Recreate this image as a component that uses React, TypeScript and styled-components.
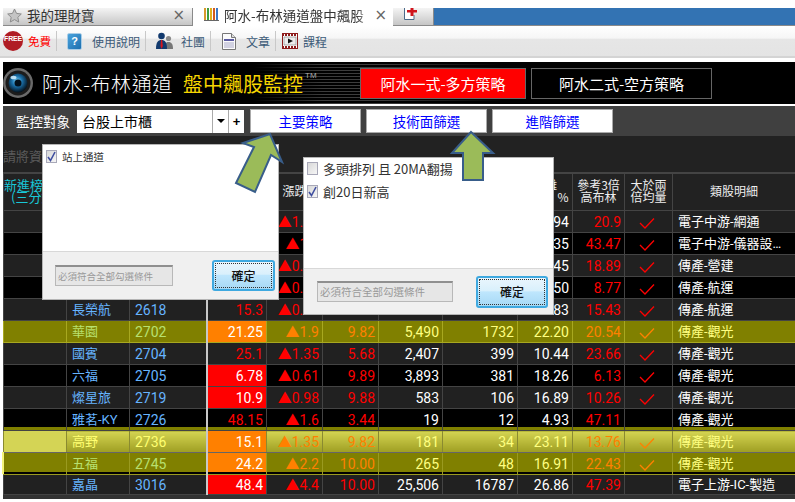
import React from "react";
import styled, { createGlobalStyle, css } from "styled-components";

const cjk = `"Noto Sans CJK TC", "Noto Sans", sans-serif`;
const num = `Roboto, "Noto Sans CJK TC", sans-serif`;

const Global = createGlobalStyle`
  html, body { margin: 0; padding: 0; background: #fff; overflow: hidden; }
  * { box-sizing: border-box; }
`;

const Page = styled.div`
  position: relative;
  width: 795px;
  height: 502px;
  padding: 8px 0 0 3px;
  font-family: ${cjk};
  background: #fff;
  overflow: hidden;
`;

/* ---------- browser tabs ---------- */
const TabBar = styled.div`
  display: flex;
  height: 18px;
`;
const Tab = styled.div<{ $w: number; $active?: boolean }>`
  width: ${(p) => p.$w}px;
  height: 18px;
  display: flex;
  align-items: flex-start;
  color: #333;
  font-size: 13.5px;
  line-height: 14px;
  white-space: nowrap;
  overflow: hidden;
  ${(p) =>
    p.$active
      ? css`
          background: #fff;
          padding: 0 6px 0 11px;
        `
      : css`
          background: linear-gradient(#f4f4f4, #c6c6c6);
          border-right: 1px solid #8a8a8a;
          border-bottom: 1px solid #8a8a8a;
          padding: 0 7px 0 4px;
        `}
`;
const NewTab = styled(Tab)`
  padding-left: 11px;
`;
const TabLabel = styled.span<{ $w: number; $fade?: boolean }>`
  display: block;
  margin-left: 5px;
  width: ${(p) => p.$w}px;
  height: 18px;
  ${(p) =>
    p.$fade &&
    css`
      -webkit-mask-image: linear-gradient(90deg, #000 92%, rgba(0, 0, 0, 0.35));
    `}
`;
const TabClose = styled.span`
  margin-left: auto;
  font: 15px/15px "DejaVu Sans", sans-serif;
  color: #666;
`;
const TabFill = styled.div`
  flex: 1;
  background: #3373b3;
  border-bottom: 1px solid #8a8a8a;
`;

/* ---------- site toolbar ---------- */
const Toolbar = styled.div`
  height: 32px;
  margin-left: -3px;
  padding-left: 3px;
  display: flex;
  align-items: center;
  background: linear-gradient(#fff 0, #f6f6f6 40%, #e6e6e6 45%, #e4e4e4 100%);
  border-bottom: 2px solid #d4d4d4;
`;
const ToolItem = styled.div<{ $w: number; $gap: number; $pl: number }>`
  width: ${(p) => p.$w}px;
  padding-left: ${(p) => p.$pl}px;
  display: flex;
  align-items: center;
  gap: ${(p) => p.$gap}px;
  height: 20px;
  font-size: 12px;
  color: #3c5a78;
  border-right: 1px solid #c8c8c8;
  white-space: nowrap;
  &:last-child { border-right: 0; }
`;
const RedLabel = styled.span`
  color: #f00;
  font-size: 11.5px;
`;
const FreeBadge = styled.div`
  width: 20px;
  height: 20px;
  border-radius: 50%;
  background: #b01c24;
  color: #fff;
  font: bold 7px/16px "Liberation Sans", sans-serif;
  text-align: center;
  letter-spacing: -0.2px;
  flex: none;
`;
const HelpIcon = styled.div`
  width: 15px;
  height: 17px;
  background: linear-gradient(135deg, #4ba3dd, #1d6fae);
  border: 1px solid #aacde6;
  border-radius: 2px;
  color: #fff;
  font: bold 11px/15px "Liberation Sans", sans-serif;
  text-align: center;
  flex: none;
`;

/* ---------- product header ---------- */
const Header = styled.div`
  margin-top: 4px;
  height: 42px;
  display: flex;
  align-items: center;
  color: #fff;
  background-color: #000;
  background-image: linear-gradient(90deg, #000 250px, transparent 320px, transparent 380px, #000 500px),
    repeating-linear-gradient(0deg, #3c3c3c 0 1px, #000 1px 3px);
`;
const Lens = styled.svg`
  width: 30px;
  height: 30px;
  flex: none;
  margin-right: 9px;
`;
const Title = styled.div`
  font-size: 20px;
  font-weight: 300;
  letter-spacing: 0.6px;
  width: 141px;
  white-space: nowrap;
`;
const GoldTitle = styled.div`
  font-size: 20px;
  color: #f7d600;
  white-space: nowrap;
  width: 120px;
  position: relative;
`;
const TradeMark = styled.sup`
  position: absolute;
  left: 122px;
  top: 2px;
  margin: 0;
  font: 8px "Liberation Sans", sans-serif;
  color: #aaa;
`;
const Strategy = styled.div<{ $w: number; $on?: boolean; $ml: number }>`
  width: ${(p) => p.$w}px;
  margin-left: ${(p) => p.$ml}px;
  height: 31px;
  border: 1px solid #666;
  background: ${(p) => (p.$on ? "#f00" : "#000")};
  color: #fff;
  font-size: 15px;
  line-height: 29px;
  text-align: center;
  white-space: nowrap;
`;

/* ---------- controls ---------- */
const Controls = styled.div`
  margin-top: 2px;
  height: 30px;
  background: #404040;
  display: flex;
  align-items: center;
  padding-left: 13px;
`;
const ControlLabel = styled.div`
  color: #fff;
  font-size: 13.5px;
  width: 61px;
  white-space: nowrap;
`;
const Select = styled.div`
  width: 167px;
  height: 23px;
  background: #fff;
  display: flex;
  align-items: center;
  font-size: 14px;
  color: #000;
  padding-left: 5px;
  margin-right: 6px;
`;
const SelectText = styled.span`
  flex: 1;
`;
const SelectBtn = styled.span`
  width: 16px;
  height: 23px;
  border-left: 1px solid #aaa;
  display: flex;
  align-items: center;
  justify-content: center;
  font: bold 13px "Liberation Sans", sans-serif;
`;
const Caret = styled.span`
  width: 0;
  height: 0;
  border-left: 4px solid transparent;
  border-right: 4px solid transparent;
  border-top: 4px solid #000;
`;
const FilterBtn = styled.div<{ $w: number }>`
  width: ${(p) => p.$w}px;
  height: 24px;
  margin-right: 5px;
  background: #fff;
  border: 1px solid #aaa;
  color: #00f;
  font-size: 13.5px;
  line-height: 22px;
  text-align: center;
`;

/* ---------- info strip + table ---------- */
const Info = styled.div`
  height: 37px;
  background: #222;
  color: #5a5a5a;
  font-size: 13px;
  line-height: 39px;
  border-bottom: 1px solid #444;
`;
const Table = styled.table`
  width: 792px;
  table-layout: fixed;
  border-collapse: collapse;
  font-family: ${num};
`;
const HeadCell = styled.th<{ $cyan?: boolean }>`
  height: 37px;
  padding: 0 0 2px;
  background: #222;
  border: 1px solid #444;
  color: ${(p) => (p.$cyan ? "#19c8d8" : "#eee")};
  font-family: ${cjk};
  font-size: ${(p) => (p.$cyan ? 13 : 12)}px;
  font-weight: 400;
  line-height: 12.5px;
  white-space: nowrap;
  overflow: hidden;
`;
type Kind = "dark" | "black" | "olive" | "blackBand" | "bright" | "oliveGap" | "last";
const bg: Record<Kind, string> = {
  dark: "#212121",
  black: "#000",
  olive: "#808000",
  blackBand: "#000",
  bright: "linear-gradient(#d4d452, #9e9e22)",
  oliveGap: "#808000",
  last: "#212121",
};
const Row = styled.tr<{ $kind: Kind }>`
  height: ${(p) => (p.$kind === "last" ? 20 : 22)}px;
`;
const Cell = styled.td<{
  $kind: Kind;
  $tone: "name" | "red" | "white" | "text";
  $fill?: "red" | "orange";
  $align?: string;
  $cjk?: boolean;
}>`
  position: relative;
  padding: 0 ${(p) => (p.$align === "left" ? 0 : 3)}px 0 ${(p) => (p.$align === "left" ? 5 : 0)}px;
  border: 1px solid #444;
  text-align: ${(p) => p.$align || "right"};
  font-size: ${(p) => (p.$cjk ? 13 : 14)}px;
  line-height: 18px;
  white-space: nowrap;
  overflow: hidden;
  background: ${(p) => (p.$fill === "red" ? "#f00" : p.$fill === "orange" ? "#ff8000" : bg[p.$kind])};
  ${(p) => {
    const lit = p.$kind === "olive" || p.$kind === "bright" || p.$kind === "oliveGap";
    if (p.$fill) return "color:#fff;";
    if (p.$tone === "name") return `color:${lit ? (p.$kind === "bright" ? "#ffff70" : "#b8e070") : "#66b4ff"};`;
    if (p.$tone === "red") return `color:${lit ? "#ff8000" : "#f00"};`;
    return `color:${lit ? "#ffff80" : "#fff"};`;
  }}
  ${(p) =>
    p.$kind === "blackBand" &&
    css`
      box-shadow: inset 0 -3px 0 #808000;
    `}
  ${(p) =>
    p.$kind === "bright" &&
    css`
      border-color: #8a8a30;
      border-bottom-color: #666;
    `}
  ${(p) =>
    p.$kind === "oliveGap" &&
    css`
      box-shadow: inset 0 -2px 0 #000;
      border-color: #9a9a20;
    `}
  ${(p) =>
    p.$kind === "olive" &&
    css`
      border-color: #a8a820;
    `}
`;
const FirstCell = styled(Cell)`
  overflow: visible;
  ${(p) =>
    p.$kind === "bright" &&
    css`
      background: #d4d455;
    `}
`;
const PriceCell = styled(Cell)`
  border-left: 2px solid #c8c8c8;
`;
const Tick = styled.svg`
  display: block;
  margin: 3px auto 0;
  width: 16px;
  height: 11px;
`;
const Foot = styled.div`
  height: 4px;
  background: #333;
`;
const LeftGlow = styled.span`
  position: absolute;
  left: -2px;
  top: -1px;
  width: 2px;
  height: 22px;
  background: #f4f47a;
`;

/* ---------- floating dialogs ---------- */
const Dialog = styled.div<{ $x: number; $y: number; $w: number; $h: number; $foot: number }>`
  position: absolute;
  left: ${(p) => p.$x}px;
  top: ${(p) => p.$y}px;
  width: ${(p) => p.$w}px;
  height: ${(p) => p.$h}px;
  background: #f0f0f0;
  border: 1px solid #b5b5b5;
  display: grid;
  grid-template-rows: 1fr ${(p) => p.$foot}px;
`;
const List = styled.div<{ $size: number; $top: number }>`
  background: #fff;
  padding: ${(p) => p.$top}px 3px 0;
  color: #333;
  font-size: ${(p) => p.$size}px;
  border-bottom: 1px solid #d8d8d8;
  display: flex;
  flex-direction: column;
  gap: 2px;
`;
const Option = styled.div`
  display: flex;
  align-items: center;
  gap: 5px;
  height: 21px;
  white-space: nowrap;
`;
const Box = styled.span`
  width: 11px;
  height: 13px;
  border: 1px solid #a8a8b8;
  background: linear-gradient(135deg, #d8d8d8, #f6f6f6);
  flex: none;
  display: flex;
  align-items: center;
  justify-content: center;
`;
const DialogFoot = styled.div<{ $l: number; $r: number }>`
  display: flex;
  align-items: center;
  justify-content: space-between;
  padding: 0 ${(p) => p.$r}px 0 ${(p) => p.$l}px;
`;
const Hint = styled.div<{ $w: number; $size: number }>`
  width: ${(p) => p.$w}px;
  height: 21px;
  background: #e6e6e6;
  border: 1px solid #b8b8b8;
  border-top: 2px solid #8f8f8f;
  color: #999;
  font-size: ${(p) => p.$size}px;
  line-height: 18px;
  padding-left: 2px;
  white-space: nowrap;
  overflow: hidden;
`;
const Confirm = styled.div<{ $w: number; $h: number }>`
  width: ${(p) => p.$w}px;
  height: ${(p) => p.$h}px;
  border: 2px solid #3fa9e0;
  border-radius: 3px;
  background: linear-gradient(#eaf6fd 0, #d9f0fc 45%, #bee6fd 50%, #a7d9f5 100%);
  color: #111;
  font-size: 12px;
  font-weight: 500;
  line-height: ${(p) => p.$h - 4}px;
  text-align: center;
  outline: 1px dotted #333;
  outline-offset: -4px;
`;
const Arrow = styled.svg`
  position: absolute;
  left: 0;
  top: 0;
  width: 795px;
  height: 502px;
  pointer-events: none;
`;

/* ---------- data ---------- */
type R = {
  kind: Kind;
  name: string;
  code: string;
  price: string;
  fill?: "red" | "orange";
  chg: string;
  pct: string;
  vol: string;
  vol2: string;
  avg: string;
  ref: string;
  tick: boolean;
  cat: string;
};
const rows: R[] = [
  { kind: "dark", name: "智邦", code: "2345", price: "18.2", chg: "▲1.35", pct: "9.82", vol: "1,204", vol2: "320", avg: "18.94", ref: "20.9", tick: true, cat: "電子中游-網通" },
  { kind: "black", name: "致茂", code: "2360", price: "41.3", chg: "▲1.1", pct: "2.74", vol: "2,110", vol2: "402", avg: "40.35", ref: "43.47", tick: true, cat: "電子中游-儀器設…" },
  { kind: "dark", name: "潤弘", code: "2597", price: "16.8", chg: "▲0.45", pct: "2.75", vol: "840", vol2: "210", avg: "16.45", ref: "18.89", tick: true, cat: "傳產-營建" },
  { kind: "black", name: "華航", code: "2610", price: "8.12", chg: "▲0.71", pct: "9.58", vol: "9,320", vol2: "1230", avg: "7.50", ref: "8.77", tick: true, cat: "傳產-航運" },
  { kind: "dark", name: "長榮航", code: "2618", price: "15.3", chg: "▲0.81", pct: "", vol: "", vol2: "", avg: "14.83", ref: "15.43", tick: true, cat: "傳產-航運" },
  { kind: "olive", name: "華園", code: "2702", price: "21.25", fill: "orange", chg: "▲1.9", pct: "9.82", vol: "5,490", vol2: "1732", avg: "22.20", ref: "20.54", tick: true, cat: "傳產-觀光" },
  { kind: "dark", name: "國賓", code: "2704", price: "25.1", chg: "▲1.35", pct: "5.68", vol: "2,407", vol2: "399", avg: "10.44", ref: "23.66", tick: true, cat: "傳產-觀光" },
  { kind: "black", name: "六福", code: "2705", price: "6.78", fill: "red", chg: "▲0.61", pct: "9.89", vol: "3,893", vol2: "381", avg: "18.26", ref: "6.13", tick: true, cat: "傳產-觀光" },
  { kind: "dark", name: "燦星旅", code: "2719", price: "10.9", fill: "red", chg: "▲0.98", pct: "9.88", vol: "583", vol2: "106", avg: "16.89", ref: "10.26", tick: true, cat: "傳產-觀光" },
  { kind: "blackBand", name: "雅茗-KY", code: "2726", price: "48.15", chg: "▲1.6", pct: "3.44", vol: "19", vol2: "12", avg: "4.93", ref: "47.11", tick: false, cat: "傳產-觀光" },
  { kind: "bright", name: "高野", code: "2736", price: "15.1", fill: "orange", chg: "▲1.35", pct: "9.82", vol: "181", vol2: "34", avg: "23.11", ref: "13.76", tick: true, cat: "傳產-觀光" },
  { kind: "oliveGap", name: "五福", code: "2745", price: "24.2", fill: "orange", chg: "▲2.2", pct: "10.00", vol: "265", vol2: "48", avg: "16.91", ref: "22.43", tick: true, cat: "傳產-觀光" },
  { kind: "last", name: "嘉晶", code: "3016", price: "48.4", fill: "red", chg: "▲4.4", pct: "10.00", vol: "25,506", vol2: "16787", avg: "26.86", ref: "47.39", tick: false, cat: "電子上游-IC-製造" },
];
const widths = [63, 63, 77, 60, 56, 56, 64, 75, 55, 52, 48, 123];

const StarIcon = () => (
  <svg width="15" height="15" viewBox="0 0 15 15">
    <path d="M7.5 1l2 4.4 4.8.6-3.5 3.3.9 4.7-4.2-2.4-4.2 2.4.9-4.7L.7 6l4.8-.6z" fill="#c4c4c4" stroke="#8c8c8c" />
  </svg>
);
const BarsIcon = () => (
  <svg width="15" height="13" viewBox="0 0 15 13">
    <rect x="0" y="0" width="2" height="12" fill="#d89a2c" />
    <rect x="3" y="0" width="2" height="12" fill="#3f9e3f" />
    <rect x="6" y="0" width="2" height="12" fill="#e0b020" />
    <rect x="9" y="0" width="2" height="12" fill="#d05a20" />
    <rect x="12" y="0" width="2" height="12" fill="#3a78c8" />
    <rect x="0" y="12" width="15" height="1" fill="#666" />
  </svg>
);
const NewTabIcon = () => (
  <svg width="14" height="13" viewBox="0 0 14 13">
    <path d="M.5 0v11.500H10V7" fill="#fff" stroke="#4a6a8a" />
    <rect x="1" y="0" width="8" height="11" fill="#fff" />
    <path d="M3 2h3.500V0h3v2H13v2.500H9.500V8h-3V4.500H3z" fill="#d0141c" />
  </svg>
);
const PeopleIcon = () => (
  <svg width="17" height="18" viewBox="0 0 17 18">
    <circle cx="12.5" cy="6.5" r="2.6" fill="#8c8c8c" />
    <path d="M8 17c0-5 1.5-7 4.5-7s4.500 2 4.500 7z" fill="#777" />
    <circle cx="5.500" cy="4" r="3.300" fill="#123a6e" />
    <path d="M0 17C0 10 2 8 5.500 8S11 10 11 17z" fill="#123a6e" />
    <path d="M5 8h1.200l.6 6-1.200 3-1.100-3z" fill="#d8141c" />
  </svg>
);
const DocIcon = () => (
  <svg width="14" height="17" viewBox="0 0 14 17">
    <path d="M.5.500h9l4 4v12H.500z" fill="#fbfbfb" stroke="#777" />
    <path d="M9.500.500v4h4" fill="#ddd" stroke="#777" />
    <rect x="2" y="6" width="10" height="2" fill="#5a5aa0" />
    <path d="M2 10h10M2 12h10M2 14h10" stroke="#a8a8c8" />
  </svg>
);
const FilmIcon = () => (
  <svg width="16" height="16" viewBox="0 0 16 16">
    <rect x=".5" y=".500" width="15" height="15" fill="#fff" stroke="#8e1c1c" />
    <path d="M0 1.500h16M0 14.500h16" stroke="#8e1c1c" strokeWidth="3" strokeDasharray="2 1" />
    <rect x="2" y="4" width="12" height="8" fill="#ececec" stroke="#666" strokeWidth=".5" />
    <path d="M6 5.500l5 2.500-5 2.500z" fill="#111" />
  </svg>
);
const CheckMark = () => (
  <svg width="9" height="11" viewBox="0 0 9 11">
    <path d="M1 6l2.500 3.500L8 1" fill="none" stroke="#3f4ea0" strokeWidth="1.600" />
  </svg>
);

export default function App() {
  return (
    <Page>
      <Global />
      <TabBar>
        <Tab $w={190}>
          <StarIcon />
          <TabLabel $w={72}>我的理財寶</TabLabel>
          <TabClose>×</TabClose>
        </Tab>
        <Tab $w={200} $active>
          <BarsIcon />
          <TabLabel $w={144} $fade>阿水-布林通道盤中飆股</TabLabel>
          <TabClose>×</TabClose>
        </Tab>
        <NewTab $w={41}>
          <NewTabIcon />
        </NewTab>
        <TabFill />
      </TabBar>
      <Toolbar>
        <ToolItem $w={54} $pl={0} $gap={5}>
          <FreeBadge>FREE</FreeBadge>
          <RedLabel>免費</RedLabel>
        </ToolItem>
        <ToolItem $w={89} $pl={10} $gap={10}>
          <HelpIcon>?</HelpIcon>
          使用說明
        </ToolItem>
        <ToolItem $w={65} $pl={10} $gap={8}>
          <PeopleIcon />
          社團
        </ToolItem>
        <ToolItem $w={65} $pl={11} $gap={10}>
          <DocIcon />
          文章
        </ToolItem>
        <ToolItem $w={60} $pl={6} $gap={5}>
          <FilmIcon />
          課程
        </ToolItem>
      </Toolbar>

      <Header>
        <Lens viewBox="0 0 30 30">
          <defs>
            <radialGradient id="lensGlow" cx="45%" cy="40%" r="60%">
              <stop offset="0" stopColor="#7fd8ff" />
              <stop offset=".45" stopColor="#1a6fa8" />
              <stop offset="1" stopColor="#04121e" />
            </radialGradient>
          </defs>
          <circle cx="15" cy="15" r="15" fill="#6a6a6a" />
          <circle cx="15" cy="15" r="12.500" fill="#1c1c1c" />
          <circle cx="15" cy="15" r="9.500" fill="url(#lensGlow)" />
          <circle cx="15" cy="15" r="3.500" fill="#03101a" />
          <ellipse cx="10.500" cy="9.500" rx="3" ry="1.800" fill="#d8f2ff" opacity=".85" />
        </Lens>
        <Title>阿水-布林通道</Title>
        <GoldTitle>
          盤中飆股監控
          <TradeMark>TM</TradeMark>
        </GoldTitle>
        <Strategy $w={166} $ml={57} $on>阿水一式-多方策略</Strategy>
        <Strategy $w={181} $ml={5}>阿水二式-空方策略</Strategy>
      </Header>

      <Controls>
        <ControlLabel>監控對象</ControlLabel>
        <Select>
          <SelectText>台股上市櫃</SelectText>
          <SelectBtn><Caret /></SelectBtn>
          <SelectBtn>+</SelectBtn>
        </Select>
        <FilterBtn $w={111}>主要策略</FilterBtn>
        <FilterBtn $w={121}>技術面篩選</FilterBtn>
        <FilterBtn $w={121}>進階篩選</FilterBtn>
      </Controls>

      <Info>請將資</Info>
      <Table>
        <colgroup>
          {widths.map((w, i) => (
            <col key={i} style={{ width: w }} />
          ))}
        </colgroup>
        <thead>
          <tr>
            <HeadCell $cyan>新進榜提示<br />(三分鐘)</HeadCell>
            <HeadCell>股名</HeadCell>
            <HeadCell>代號</HeadCell>
            <HeadCell>價格</HeadCell>
            <HeadCell>漲跌</HeadCell>
            <HeadCell>漲幅</HeadCell>
            <HeadCell>總量</HeadCell>
            <HeadCell>單量</HeadCell>
            <HeadCell>乖離<br />　　　%</HeadCell>
            <HeadCell>參考3倍<br />高布林</HeadCell>
            <HeadCell>大於兩<br />倍均量</HeadCell>
            <HeadCell>類股明細</HeadCell>
          </tr>
        </thead>
        <tbody>
          {rows.map((r) => (
            <Row key={r.code} $kind={r.kind}>
              <FirstCell $kind={r.kind} $tone="white">
                {r.kind === "oliveGap" && <LeftGlow />}
              </FirstCell>
              <Cell $kind={r.kind} $tone="name" $align="left" $cjk>{r.name}</Cell>
              <Cell $kind={r.kind} $tone="name" $align="left">{r.code}</Cell>
              <PriceCell $kind={r.kind} $tone="red" $fill={r.fill}>{r.price}</PriceCell>
              <Cell $kind={r.kind} $tone="red">{r.chg}</Cell>
              <Cell $kind={r.kind} $tone="red">{r.pct}</Cell>
              <Cell $kind={r.kind} $tone="white">{r.vol}</Cell>
              <Cell $kind={r.kind} $tone="white">{r.vol2}</Cell>
              <Cell $kind={r.kind} $tone="white">{r.avg}</Cell>
              <Cell $kind={r.kind} $tone="red">{r.ref}</Cell>
              <Cell $kind={r.kind} $tone="red" $align="center">
                {r.tick && (
                  <Tick viewBox="0 0 16 11">
                    <path d="M1 5l5 5L15 .5" fill="none" strokeWidth="1.300" stroke={["olive", "bright", "oliveGap"].includes(r.kind) ? "#ff8000" : "#f00"} />
                  </Tick>
                )}
              </Cell>
              <Cell $kind={r.kind} $tone="text" $align="left" $cjk>{r.cat}</Cell>
            </Row>
          ))}
        </tbody>
      </Table>
      <Foot />

      <Dialog $x={42} $y={144} $w={237} $h={156} $foot={47}>
        <List $size={10.500} $top={1}>
          <Option>
            <Box><CheckMark /></Box>
            站上通道
          </Option>
        </List>
        <DialogFoot $l={12} $r={3}>
          <Hint $w={118} $size={9.500}>必須符合全部勾選條件</Hint>
          <Confirm $w={63} $h={31}>確定</Confirm>
        </DialogFoot>
      </Dialog>

      <Dialog $x={303} $y={157} $w={251} $h={158} $foot={45}>
        <List $size={13} $top={0}>
          <Option>
            <Box />
            多頭排列 且 20MA翻揚
          </Option>
          <Option>
            <Box><CheckMark /></Box>
            創20日新高
          </Option>
        </List>
        <DialogFoot $l={13} $r={5}>
          <Hint $w={136} $size={10.500}>必須符合全部勾選條件</Hint>
          <Confirm $w={72} $h={32}>確定</Confirm>
        </DialogFoot>
      </Dialog>

      <Arrow viewBox="0 0 795 502">
        <path d="M270 134L243 143L254 147L236 183L255 192L271 155L282 162Z" fill="#9bbb59" stroke="#385d8a" strokeWidth="2" />
        <path d="M471 132L493 153H483V180H463V153H452Z" fill="#9bbb59" stroke="#385d8a" strokeWidth="2" />
      </Arrow>
    </Page>
  );
}
